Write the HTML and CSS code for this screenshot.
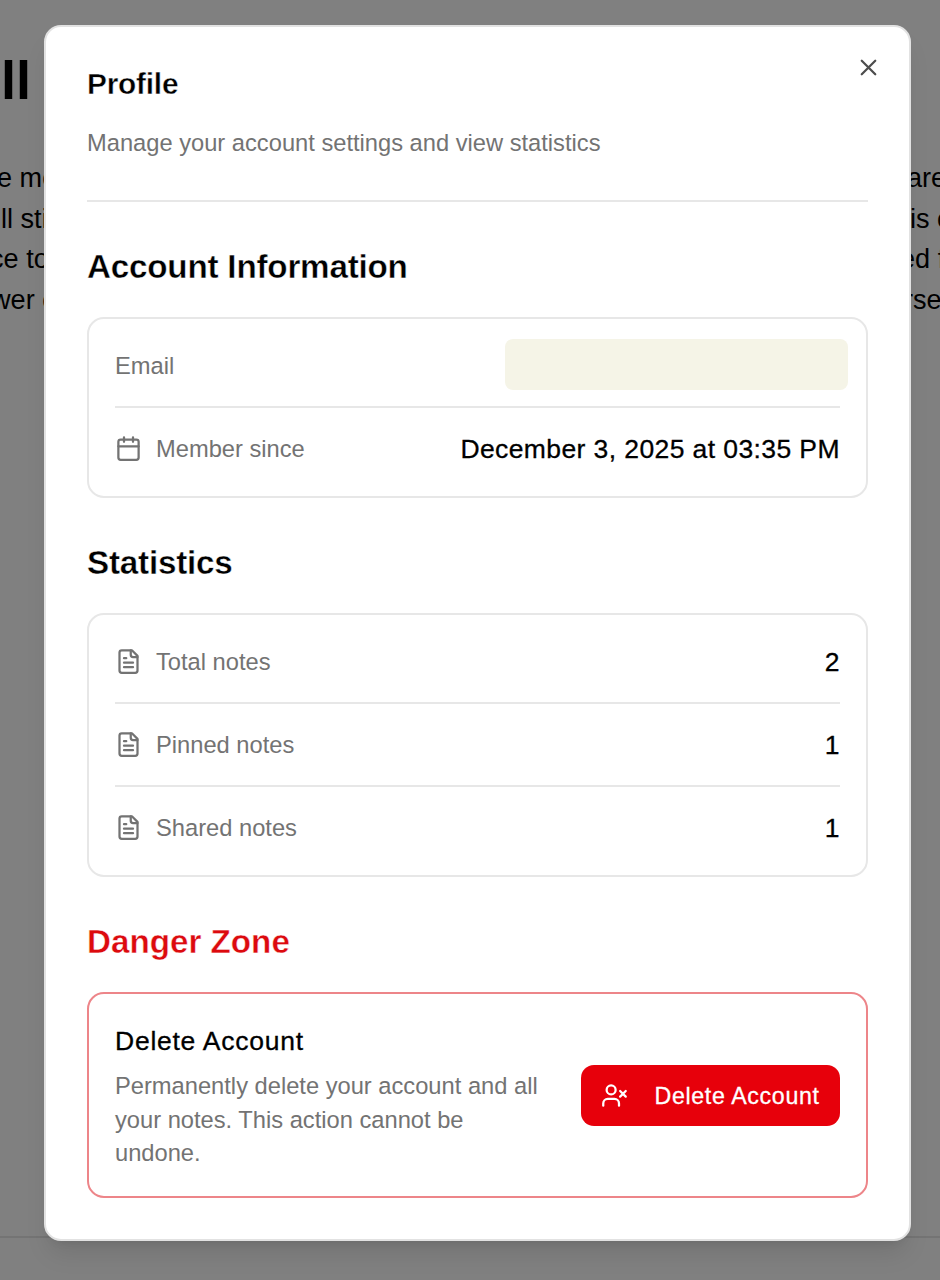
FILE: index.html
```html
<!DOCTYPE html>
<html lang="en">
<head>
<meta charset="utf-8">
<title>Profile</title>
<link rel="stylesheet" href="styles.css">
</head>
<body>
<svg width="0" height="0" class="defs">
  <symbol id="file" viewBox="0 0 24 24"><path d="M15 2H6a2 2 0 0 0-2 2v16a2 2 0 0 0 2 2h12a2 2 0 0 0 2-2V7Z"/><path d="M14 2v4a2 2 0 0 0 2 2h4M10 9H8M16 13H8M16 17H8"/></symbol>
</svg>
<div class="page">
  <div class="note" aria-hidden="true">
    <div class="note-title">ll</div>
    <div class="note-line"><span class="l1">e mo</span><span class="r1">are</span></div>
    <div class="note-line"><span class="l2">ll stil</span><span class="r2">is o</span></div>
    <div class="note-line"><span class="l3">ce to</span><span class="r3">ed f</span></div>
    <div class="note-line"><span class="l4">wer o</span><span class="r4">rse</span></div>
    <div class="note-footer"></div>
  </div>
  <main class="dialog" role="dialog">
    <button class="close" aria-label="Close"><svg class="icon" viewBox="0 0 24 24"><path d="M18 6 6 18M6 6l12 12"/></svg></button>
    <header class="header">
      <h1 class="title">Profile</h1>
      <p class="description">Manage your account settings and view statistics</p>
    </header>
    <section class="section">
      <h2 class="heading">Account Information</h2>
      <div class="card">
        <div class="row"><span class="label">Email</span><span class="email"></span></div>
        <div class="row">
          <span class="label"><svg class="icon" viewBox="0 0 24 24"><path d="M8 2v4M16 2v4M3 10h18"/><rect x="3" y="4" width="18" height="18" rx="2"/></svg>Member since</span>
          <span class="value">December 3, 2025 at 03:35 PM</span>
        </div>
      </div>
    </section>
    <section class="section">
      <h2 class="heading">Statistics</h2>
      <div class="card">
        <div class="row"><span class="label"><svg class="icon"><use href="#file"/></svg>Total notes</span><span class="value">2</span></div>
        <div class="row"><span class="label"><svg class="icon"><use href="#file"/></svg>Pinned notes</span><span class="value">1</span></div>
        <div class="row"><span class="label"><svg class="icon"><use href="#file"/></svg>Shared notes</span><span class="value">1</span></div>
      </div>
    </section>
    <section class="section">
      <h2 class="heading danger">Danger Zone</h2>
      <div class="card danger-card">
        <div class="danger-copy">
          <h3 class="danger-title">Delete Account</h3>
          <p class="danger-text">Permanently delete your account and all your notes. This action cannot be undone.</p>
        </div>
        <button class="delete"><svg class="icon" viewBox="0 0 24 24"><path d="M16 21v-2a4 4 0 0 0-4-4H6a4 4 0 0 0-4 4v2"/><circle cx="9" cy="7" r="4"/><path d="m17 8 5 5M22 8l-5 5"/></svg><span class="delete-label">Delete Account</span></button>
      </div>
    </section>
  </main>
</div>
</body>
</html>
```
FILE: styles.css
```css
* { box-sizing: border-box; margin: 0; }
body { font-family: "Liberation Sans", Arial, sans-serif; color: #000; background: #808080; }
.defs { position: absolute; }
.page { position: relative; width: 940px; height: 1280px; overflow: hidden; }

.note { height: 1280px; padding-top: 50px; display: flex; flex-direction: column; }
.note-title { height: 108px; font-size: 54.2px; line-height: 60px; font-weight: 700; padding-left: 1px; }
.note-line { display: grid; grid-template-columns: 60px 60px; justify-content: space-between; height: 40.6px; line-height: 40.6px; font-size: 27.1px; white-space: nowrap; }
.l1 { text-indent: -3px; }
.l2 { text-indent: 1px; }
.l3 { text-indent: -10px; }
.l4 { text-indent: -9px; }
.r1 { text-indent: 27px; }
.r2 { text-indent: 30px; }
.r3 { text-indent: 20px; }
.r4 { text-indent: 24px; }
.note-footer { margin-top: auto; height: 44px; border-top: 2px solid #747474; }

.dialog {
  position: absolute; left: 44px; top: 25px; width: 867px; height: 1216px;
  padding: 42px 41px 40px; border: 2px solid #e2e2e2; border-radius: 17px; background: #fff;
  box-shadow: 0 17px 25px -5px rgba(0,0,0,.1), 0 7px 10px -7px rgba(0,0,0,.1);
}
.close { position: absolute; right: 27px; top: 27px; padding: 0; border: 0; background: none; color: #4d4d4d; line-height: 0; }
.icon { width: 27px; height: 27px; flex: none; fill: none; stroke: currentColor; stroke-width: 2; stroke-linecap: round; stroke-linejoin: round; }
.header { height: 132.5px; border-bottom: 2px solid #e7e7e7; display: flex; flex-direction: column; gap: 28px; }
.title { font-size: 29.8px; line-height: 30px; font-weight: 700; letter-spacing: -.2px; -webkit-text-stroke: .4px #fff; }
.description { font-size: 23.7px; line-height: 33.8px; color: #737373; }
.section { padding-top: 40.6px; }
.heading { font-size: 33.2px; line-height: 49.4px; margin-bottom: 25px; font-weight: 700; letter-spacing: -.2px; -webkit-text-stroke: .4px #fff; }
.danger { color: #dc0a0e; letter-spacing: 0; }
.card { border: 2px solid #e7e7e7; border-radius: 17px; padding: 6.6px 26.5px 6.6px 26px; }
.row { height: 83px; display: flex; align-items: center; justify-content: space-between; border-bottom: 2px solid #e7e7e7; }
.row:last-child { height: 81px; border-bottom: 0; }
.label { display: flex; align-items: center; gap: 14px; font-size: 23.7px; line-height: 28px; padding-top: 1px; color: #737373; }
.label .icon { margin-top: -1px; }
.value { font-size: 26.5px; letter-spacing: .4px; margin-right: -.4px; padding-top: 1px; -webkit-text-stroke: .3px currentColor; }
.email { width: 343px; height: 51px; margin-right: -8px; margin-top: -3px; border-radius: 8px; background: #f5f4e7; }
.danger-card { height: 206px; display: flex; align-items: flex-start; gap: 27px; padding: 27px 26.5px 0 26px; border-color: #ed8589; }
.danger-copy { flex: 1; }
.danger-title { font-size: 26.5px; line-height: 41px; font-weight: 400; letter-spacing: .75px; margin-bottom: 8px; -webkit-text-stroke: .3px currentColor; }
.danger-text { font-size: 23.7px; line-height: 33.8px; color: #737373; }
.delete { height: 61px; width: 259px; margin-top: 44px; flex: none; display: flex; align-items: center; gap: 27px; padding: 0 20px; border: 0; border-radius: 13px; background: #e7000b; color: #fff; font: 23.2px "Liberation Sans", Arial, sans-serif; letter-spacing: .65px; white-space: nowrap; }
.delete-label { padding-top: 2px; -webkit-text-stroke: .3px currentColor; }
```
